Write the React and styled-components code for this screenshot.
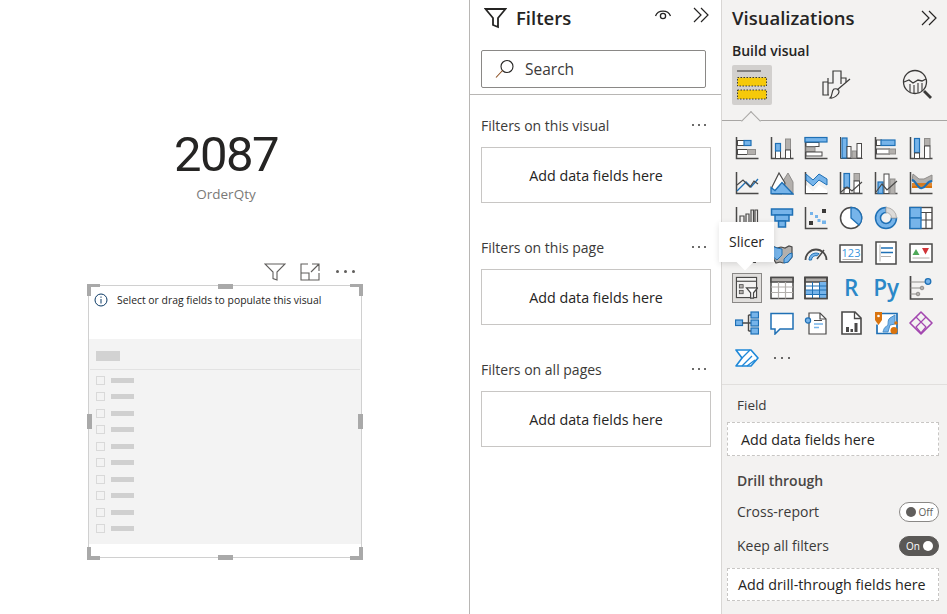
import React from "react";
import styled, { createGlobalStyle } from "styled-components";

const D = "#4a4948";
const B = "#1f70b5";
const L = "#76b4ea";
const G = "#b3b0ad";
const GS = "#8f8d8b";
const O = "#d9730d";
const FONT = `"Open Sans", "Noto Sans", sans-serif`;

const GlobalStyle = createGlobalStyle`
  html, body { margin: 0; padding: 0; height: 100%; background: #fff; }
  #root { height: 100%; }
  * { box-sizing: border-box; }
  body { font-family: ${FONT}; color: #252423; }
`;

const Ic = ({ children, size = 24, fill = "none" }) => (
  <svg width={size} height={size} viewBox="0 0 24 24" fill={fill}>
    {children}
  </svg>
);
const Ax = () => <path d="M1.5 1v21.5H23.5" stroke={D} strokeWidth="1.5" fill="none" />;
const Wr = (p) => <rect fill="#fff" stroke={D} strokeWidth="1" {...p} />;
const Bl = (p) => <rect fill={L} stroke={B} strokeWidth="1.2" {...p} />;
const Gr = (p) => <rect fill={G} stroke={GS} strokeWidth="1" {...p} />;

const icons = [
  <Ic><Ax /><Wr x="2.5" y="4.5" width="7" height="5" /><Bl x="9" y="4.5" width="7" height="5" /><Wr x="2.5" y="13.5" width="10" height="5" /><Gr x="12.5" y="13.5" width="8" height="5" /></Ic>,
  <Ic><Ax /><Wr x="5.5" y="14" width="5" height="8.5" /><Bl x="5.5" y="7.5" width="5" height="7.5" /><Gr x="15.5" y="3" width="5" height="11" /><Wr x="15.5" y="14" width="5" height="8.5" /></Ic>,
  <Ic><Ax /><Wr x="2" y="6.5" width="13" height="4" /><Gr x="2" y="11" width="9" height="4.5" /><Wr x="2" y="16" width="16" height="4" /><Bl x="1" y="1.5" width="22" height="4.5" /></Ic>,
  <Ic><path d="M1.5 1v21.5H23.5" stroke={D} strokeWidth="1" /><Bl x="3" y="2" width="5" height="20" /><Wr x="8" y="10.5" width="4" height="11.5" /><Gr x="13" y="15" width="4.5" height="7" /><Wr x="18" y="7.5" width="4.5" height="14.5" /></Ic>,
  <Ic><Ax /><Wr x="2.5" y="4" width="5" height="5.5" /><Bl x="7" y="4" width="14" height="5.5" /><Wr x="2.5" y="13" width="13" height="5" /><Gr x="15" y="13" width="6.5" height="5" /></Ic>,
  <Ic><Ax /><Bl x="5.5" y="2.5" width="5" height="14" /><Wr x="5.5" y="17" width="5" height="5.5" /><Gr x="15.5" y="2.5" width="5.5" height="7" /><Wr x="15.5" y="10" width="5.5" height="12.5" /></Ic>,

  <Ic><Ax /><path d="M2 20l9-9 5 5 7-8" stroke={B} strokeWidth="1.3" /><path d="M2 14l6-5 7 7 4-6 4 3" stroke={D} strokeWidth="1.2" /></Ic>,
  <Ic><path d="M13 10l5-8 5 9v12H13z" fill={G} stroke={GS} /><path d="M2 16L9 2l6 10-3 11H2z" fill="#fff" stroke={D} strokeWidth="1.2" /><path d="M1 22.5v-6l4 3 7-8 11 11.5z" fill={L} stroke={B} strokeWidth="1.3" /></Ic>,
  <Ic><path d="M1.5 1v21.5H23.5" stroke={D} strokeWidth="1.5" /><path d="M2 14l7 6 6-6 8 5v3H2z" fill="#fff" /><path d="M2 3l7 6 6-6 8 5v6l-8-5-6 6-7-6z" fill={L} stroke={B} strokeWidth="1" /></Ic>,
  <Ic><Ax /><Bl x="5" y="2.5" width="5.5" height="14" /><Wr x="5" y="17" width="5.5" height="5.5" /><Gr x="15" y="2.5" width="5.5" height="7" /><Wr x="15" y="10" width="5.5" height="12" /><path d="M2 21l6-5 5 4 10-9" stroke={D} strokeWidth="1.2" /></Ic>,
  <Ic><Ax /><Bl x="4" y="11" width="5" height="11.5" /><Wr x="10" y="3" width="5" height="19.5" /><Gr x="16" y="8" width="5" height="14.5" /><path d="M2 21l6-8 5 6 10-9" stroke={D} strokeWidth="1.2" /></Ic>,
  <Ic><Ax /><path d="M4 3l6 5h5l8-4v7l-7 3H9L3 10z" fill={G} stroke={GS} /><path d="M3 12h20v5H3z" fill={O} opacity=".85" /><path d="M3 9c4 0 5 9 10 8s4-7 10-7" stroke={B} strokeWidth="2.2" /><path d="M3 16h5M17 16h6" stroke={O} strokeWidth="2" /></Ic>,

  <Ic><Ax /><path d="M5 21V10h4v11M11 21V8h3v13M16 21V4h2.5v17M20 21V4h2.5v17" stroke={D} strokeWidth="1.2" /></Ic>,
  <Ic><path d="M1.5 3h21v6h-21z" fill={L} stroke={B} strokeWidth="1.5" /><path d="M5 9h14v6H5z" fill={L} stroke={B} strokeWidth="1.5" /><path d="M8.5 15h7v6h-7z" fill={L} stroke={B} strokeWidth="1.5" /></Ic>,
  <Ic><Ax /><rect x="5" y="15" width="4" height="4" fill="#3b3a39" /><rect x="18" y="3" width="4" height="4" fill="#3b3a39" /><rect x="6" y="6" width="3" height="3" fill={L} /><rect x="11" y="9" width="3" height="3" fill={L} /><rect x="13.5" y="13" width="3" height="3" fill={L} /><rect x="18" y="14.5" width="4" height="3.5" fill={L} /></Ic>,
  <Ic><circle cx="12" cy="12" r="10.5" fill="#fff" stroke={D} strokeWidth="1.5" /><path d="M12 1.5A10.5 10.5 0 0 1 20 19L12 12z" fill={L} stroke={B} strokeWidth="1.3" /></Ic>,
  <Ic><path d="M12 1.5a10.5 10.5 0 1 0 10.5 10.5h-5a5.5 5.5 0 1 1-5.5-5.5z" fill={L} stroke={B} strokeWidth="1.5" /><path d="M12 1.5a10.5 10.5 0 0 1 10.5 10.5h-5a5.5 5.5 0 0 0-5.5-5.5z" fill="#dddbd9" stroke={G} strokeWidth="1" /></Ic>,
  <Ic><rect x="1" y="1.5" width="22" height="21" fill="#fff" stroke={D} strokeWidth="1.4" /><path d="M12 6.5h11M17 6.5v16M12 14h11" stroke={D} strokeWidth="1.2" /><rect x="1" y="1.5" width="11" height="10.5" fill={L} stroke={B} strokeWidth="1.3" /><rect x="1" y="12" width="11" height="10.5" fill={L} stroke={B} strokeWidth="1.3" /></Ic>,

  <Ic><path d="M4 20c3-3 6 1 9-1s5-1 8 1v2H4z" fill={D} /></Ic>,
  <Ic><path d="M2 5l5 2 4-1 4 1 4-2 3 1v10l-4 5-5 1-3-1-4 1-3-5z" fill={G} stroke={D} strokeWidth="1.2" /><path d="M2 5l5 2 5 1v6l-5 5-5-4z" fill={L} stroke={B} strokeWidth="1" /><path d="M14 18l5-5 3-1v4l-4 5-4 1z" fill={L} stroke={B} strokeWidth="1" /></Ic>,
  <Ic><path d="M1.5 19a10.5 10.5 0 0 1 21 0" stroke={D} strokeWidth="1.8" /><path d="M5 19a7 7 0 0 1 10-6.3l-2 2a4.5 4.5 0 0 0-5.5 4.3z" fill={L} stroke={B} /><path d="M13 18l7-9" stroke={D} strokeWidth="1.5" /></Ic>,
  <Ic><rect x="1" y="4" width="22" height="17" fill="#fff" stroke={D} strokeWidth="1.5" /><text x="12" y="16" textAnchor="middle" fontFamily="Open Sans, sans-serif" fontSize="11" fill="#3a96dd">123</text><path d="M3.5 18.5h17" stroke={G} strokeWidth="1" /></Ic>,
  <Ic><rect x="2" y="1" width="20" height="22" fill="#fff" stroke={D} strokeWidth="1.5" /><path d="M6 3.5v17" stroke={G} /><path d="M7 7h12M7 11.5h12" stroke={B} strokeWidth="1.5" /><path d="M7 15.5h10" stroke={G} strokeWidth="1" /></Ic>,
  <Ic><rect x="1" y="3" width="22" height="18" fill="#fff" stroke={D} strokeWidth="1.5" /><path d="M3.5 14l3.5-6 3.5 6z" fill="#4da858" /><path d="M13 7h7l-3.5 6.5z" fill="#d13438" /><path d="M3.5 17h17" stroke={G} /></Ic>,

  <Ic><rect x="1.5" y="1.5" width="21" height="21" fill="#f3f2f1" stroke={D} strokeWidth="1.2" /><path d="M1.5 5.5h21" stroke={D} strokeWidth="1.2" /><rect x="4.5" y="9" width="4" height="3.5" fill={G} stroke={D} strokeWidth=".8" /><rect x="4.5" y="15" width="4" height="3.5" fill={G} stroke={D} strokeWidth=".8" /><path d="M12 12.5h11.5l-4.2 5v5.5h-3v-5.5z" fill="#fff" stroke={D} strokeWidth="1.3" /></Ic>,
  <Ic><rect x="1" y="1.5" width="22" height="21" fill="#fff" stroke={D} strokeWidth="1.5" /><rect x="1" y="1.5" width="22" height="4.5" fill={G} stroke={D} strokeWidth="1.5" /><path d="M1 11h22M1 16.5h22M8.5 6v16.5M15.5 6v16.5" stroke={G} strokeWidth="1.2" /></Ic>,
  <Ic><rect x="1" y="1.5" width="22" height="21" fill="#fff" stroke={D} strokeWidth="1.5" /><rect x="1" y="1.5" width="22" height="4.5" fill={G} stroke={D} strokeWidth="1.5" /><rect x="15.5" y="6" width="7.5" height="16.5" fill={L} /><rect x="1" y="14" width="22" height="4.5" fill={L} /><path d="M1 14h22M8.5 6v16.5M15.5 6v16.5M1 18.5h22M1 10h22" stroke={B} strokeWidth="1" /><rect x="1" y="1.5" width="22" height="21" fill="none" stroke={D} strokeWidth="1.5" /></Ic>,
  "R",
  "Py",
  <Ic><path d="M1.5 0v23H24" stroke={D} strokeWidth="1.7" /><path d="M1.5 6H18M1.5 12h11M1.5 18h7" stroke={GS} strokeWidth="1.2" /><circle cx="19" cy="5.5" r="2.8" fill={L} stroke={B} strokeWidth="1.3" /><circle cx="13" cy="12" r="1.8" fill={G} stroke={GS} /><circle cx="9" cy="18" r="1.8" fill={G} stroke={GS} /></Ic>,

  <Ic><rect x="0.5" y="9" width="7" height="5.5" fill={L} stroke={B} strokeWidth="1.2" /><path d="M7.5 12h6M13.5 4v16M13.5 4H16M13.5 12H16M13.5 20H16" stroke={D} strokeWidth="1.4" /><rect x="16" y="1" width="7.5" height="6" fill={L} stroke={B} strokeWidth="1.2" /><rect x="16" y="9" width="7.5" height="6" fill={L} stroke={B} strokeWidth="1.2" /><rect x="16" y="17" width="7.5" height="6" fill={L} stroke={B} strokeWidth="1.2" /></Ic>,
  <Ic><path d="M1 2.5h22V18H10l-5 5v-5H1z" fill="#fff" stroke={B} strokeWidth="1.5" /></Ic>,
  <Ic><path d="M5 2h11l6 6v15H5z" fill="#fff" stroke={D} strokeWidth="1.2" /><path d="M16 2v6h6" stroke={D} strokeWidth="1.2" /><circle cx="4" cy="9.5" r="2.6" fill={L} stroke={B} strokeWidth="1.2" /><path d="M10 9.5h8" stroke={D} /><path d="M10 13h9M10 16.5h5" stroke={L} strokeWidth="1.3" /></Ic>,
  <Ic><path d="M3 1h13l6 6v16H3z" fill="#fff" stroke={D} strokeWidth="1.6" /><path d="M15.5 1v6.5H22" stroke={D} strokeWidth="1.3" /><rect x="7" y="16" width="3" height="5" fill={D} /><rect x="11.5" y="18" width="2.5" height="3" fill={D} /><rect x="15.5" y="12" width="3" height="9" fill={D} /></Ic>,
  <Ic><path d="M4 2.5h19v20H3v-9" stroke={B} strokeWidth="1.7" fill="#fff" /><path d="M9 21c1-4 2-5 4-6s0-6 3-8l5-3v9l-5 1-2 7z" fill={L} stroke="#4b8fc8" /><path d="M1 1h7v8l-3.500 5L1 9z" fill={O} /><circle cx="4.5" cy="5" r="1.3" fill="#fff" /><circle cx="20" cy="19.5" r="3.5" fill={O} /><circle cx="22" cy="12" r="1.7" fill={O} /></Ic>,
  <Ic><path d="M12 1l11 11-11 11L1 12z" fill="none" stroke="#a347b0" strokeWidth="1.6" strokeLinejoin="round" /><path d="M7 6l10 10M17 6L7 16M12 11l5 5-5 6-5-6z" fill="none" stroke="#a347b0" strokeWidth="1.2" /></Ic>,

  <Ic><path d="M1 4h15l7 8-7 8H1l6-8z" fill="#fff" stroke="#1e88d8" strokeWidth="1.6" strokeLinejoin="round" /><path d="M7 12l8-8M7 20l10-10M12 20l8-6" stroke="#1e88d8" strokeWidth="1.3" /></Ic>,
  "dots",
];

const HANDLES = ["tl", "tr", "bl", "br", "t", "b", "l", "r"];
const ROWS = [0, 1, 2, 3, 4, 5, 6, 7, 8, 9];

const Chevrons = () => (
  <svg width="16" height="16" viewBox="0 0 16 16" fill="none" stroke="#252423" strokeWidth="1.2">
    <path d="M1 1l7 7-7 7M8 1l7 7-7 7" />
  </svg>
);

const App = () => (
  <Page>
    <GlobalStyle />
    <Canvas>
      <Kpi>
        <KpiValue>2087</KpiValue>
        <KpiLabel>OrderQty</KpiLabel>
      </Kpi>
      <VisualHeader>
        <svg width="22" height="18" viewBox="0 0 22 18" fill="none" stroke="#605e5c" strokeWidth="1.1">
          <path d="M1 1h20l-8 8v8l-4-1.5V9z" />
        </svg>
        <svg width="20" height="18" viewBox="0 0 20 18" fill="none" stroke="#605e5c" strokeWidth="1.1">
          <path d="M8 1H1v16h18v-7M1 10h8v7M12 1h7v7M19 1l-8 8" />
        </svg>
        <DotsDark>
          <i /><i /><i />
        </DotsDark>
      </VisualHeader>
      <Visual>
        {HANDLES.map((h) => (
          <Handle key={h} $at={h} />
        ))}
        <InfoRow>
          <svg width="14" height="14" viewBox="0 0 14 14" fill="none" stroke="#0b3a66" strokeWidth="1">
            <circle cx="7" cy="7" r="6" />
            <path d="M7 6v4.5M7 3.5v1.3" />
          </svg>
          <InfoText>Select or drag fields to populate this visual</InfoText>
        </InfoRow>
        <Placeholder>
          <PlaceholderHead>
            <HeadBar />
          </PlaceholderHead>
          <PlaceholderList>
            {ROWS.map((r) => (
              <PlaceholderRow key={r}>
                <Check />
                <RowBar />
              </PlaceholderRow>
            ))}
          </PlaceholderList>
        </Placeholder>
      </Visual>
    </Canvas>

    <Filters>
      <FiltersHead>
        <svg width="23" height="22" viewBox="0 0 23 22" fill="none" stroke="#252423" strokeWidth="1.8">
          <path d="M1.5 2h20l-7.5 9v9l-5-2v-7z" />
        </svg>
        <PaneTitle>Filters</PaneTitle>
        <HeadIcons>
          <svg width="18" height="14" viewBox="0 0 18 14" fill="none" stroke="#252423" strokeWidth="1.3">
            <path d="M1.5 8C4 1.5 14 1.5 16.5 8" />
            <circle cx="9" cy="8" r="2.6" />
          </svg>
          <Chevrons />
        </HeadIcons>
      </FiltersHead>
      <SearchBox>
        <svg width="20" height="20" viewBox="0 0 20 20" fill="none" stroke="#252423" strokeWidth="1.1">
          <circle cx="12" cy="7.5" r="6" />
          <path d="M7.5 11.5L1 18.5" stroke="#8a4b1c" />
        </svg>
        Search
      </SearchBox>
      <FilterSections>
        {["Filters on this visual", "Filters on this page", "Filters on all pages"].map((t) => (
          <FilterSection key={t}>
            <SectionTitle>
              {t}
              <MoreDots>
                <i /><i /><i />
              </MoreDots>
            </SectionTitle>
            <DropBox>Add data fields here</DropBox>
          </FilterSection>
        ))}
      </FilterSections>
    </Filters>

    <Viz>
      <VizHead>
        <PaneTitle>Visualizations</PaneTitle>
        <Chevrons />
      </VizHead>
      <BuildLabel>Build visual</BuildLabel>
      <Tabs>
        <TabActive>
          <svg width="30" height="30" viewBox="0 0 30 30">
            <path d="M0 1h24" stroke="#4a4948" strokeWidth="1.2" />
            <rect x="0.5" y="7.5" width="29" height="8.5" fill="#f5c90a" stroke="#3b3a39" strokeDasharray="1.5 1.5" />
            <rect x="0.5" y="20" width="29" height="9" fill="#f5c90a" stroke="#3b3a39" strokeDasharray="1.5 1.5" />
          </svg>
        </TabActive>
        <TabIcon $gap={45}>
          <svg width="30" height="30" viewBox="0 0 30 30" fill="none" stroke="#3b3a39" strokeWidth="1.2">
            <path d="M7 25H1V12h5v13M6 12V8M6 13h5V1h8v13M19 8h5v4" />
            <path d="M28 9L15 20M12 19c4-1 5 1 5 3s-5 7-9 6c3-2 1-7 4-9z" fill="#f3f2f1" />
          </svg>
        </TabIcon>
        <TabIcon $gap={41}>
          <svg width="32" height="32" viewBox="0 0 32 32" fill="none" stroke="#3b3a39" strokeWidth="1.3">
            <circle cx="13" cy="13" r="11.5" />
            <path d="M2 13l5-2 4 3 5-3 4 1 4-2" />
            <path d="M8 15v8M12 16v9M16 14v10M20 14v8" strokeWidth="1.1" />
            <path d="M22 22l7 7" strokeWidth="2.8" />
          </svg>
        </TabIcon>
        <Caret />
      </Tabs>

      <IconGrid>
        {icons.map((ic, i) => {
          if (ic === "R" || ic === "Py") return <Cell key={i}><Letter>{ic}</Letter></Cell>;
          if (ic === "dots") return <Cell key={i}><MoreDots $wide><i /><i /><i /></MoreDots></Cell>;
          return <Cell key={i}>{i === 24 ? <Selected>{ic}</Selected> : ic}</Cell>;
        })}
        <Tooltip>Slicer</Tooltip>
      </IconGrid>

      <Wells>
        <WellLabel>Field</WellLabel>
        <Well>Add data fields here</Well>
        <DrillTitle>Drill through</DrillTitle>
        <ToggleRow>
          Cross-report
          <Toggle>
            <Knob />
            <span>Off</span>
          </Toggle>
        </ToggleRow>
        <ToggleRow>
          Keep all filters
          <Toggle $on>
            <span>On</span>
            <Knob $on />
          </Toggle>
        </ToggleRow>
        <Well $tight>Add drill-through fields here</Well>
      </Wells>
    </Viz>
  </Page>
);

export default App;

const Page = styled.div`
  display: flex;
  width: 947px;
  height: 614px;
  overflow: hidden;
`;
const Canvas = styled.main`
  width: 470px;
  flex: none;
  padding: 126px 0 0 88px;
  border-right: 1px solid #b8b6b4;
  background: #fff;
`;
const Kpi = styled.div`
  width: 276px;
  display: flex;
  flex-direction: column;
  align-items: center;
`;
const KpiValue = styled.div`
  font-family: Roboto, sans-serif;
  font-size: 49px;
  line-height: 58px;
  color: #252423;
  letter-spacing: -1.5px;
`;
const KpiLabel = styled.div`
  font-size: 13.5px;
  line-height: 20px;
  color: #7a7977;
`;
const VisualHeader = styled.div`
  width: 274px;
  height: 22px;
  margin-top: 59px;
  padding-right: 7px;
  display: flex;
  justify-content: flex-end;
  align-items: flex-start;
  gap: 14px;
`;
const DotsDark = styled.div`
  display: flex;
  gap: 5px;
  width: 19px;
  margin: 7px 0 0 2px;
  i {
    width: 3px;
    height: 3px;
    border-radius: 50%;
    background: #605e5c;
  }
`;
const Visual = styled.section`
  position: relative;
  width: 274px;
  height: 273px;
  border: 1.5px solid #d0d0d0;
  background: #fff;
  display: flex;
  flex-direction: column;
`;
const handleAt = {
  tl: "left:-2px;top:-2px;width:13px;height:12px;border-width:3px 0 0 4px;",
  tr: "right:-2px;top:-2px;width:13px;height:12px;border-width:3px 4px 0 0;",
  bl: "left:-2px;bottom:-3px;width:13px;height:13px;border-width:0 0 4px 4px;",
  br: "right:-2px;bottom:-3px;width:13px;height:13px;border-width:0 4px 4px 0;",
  t: "left:129px;top:-2px;width:15px;height:5px;border-width:5px 0 0 0;",
  b: "left:129px;bottom:-3px;width:15px;height:5px;border-width:5px 0 0 0;",
  l: "left:-2px;top:128px;width:5px;height:15px;border-width:0 0 0 5px;",
  r: "right:-2px;top:128px;width:5px;height:15px;border-width:0 0 0 5px;",
};
const Handle = styled.div`
  position: absolute;
  border: 0 solid #a9a9a9;
  ${(p) => handleAt[p.$at]}
`;
const InfoRow = styled.div`
  height: 53px;
  flex: none;
  padding: 7px 0 0 5px;
  display: flex;
  align-items: flex-start;
  gap: 9px;
`;
const InfoText = styled.div`
  font-size: 10.4px;
  line-height: 14px;
  color: #252423;
`;
const Placeholder = styled.div`
  height: 205px;
  flex: none;
  background: #f3f3f3;
`;
const PlaceholderHead = styled.div`
  height: 31px;
  margin: 0 1px;
  padding: 12px 0 0 6px;
  border-bottom: 1px solid #e2e2e2;
`;
const HeadBar = styled.div`
  width: 24px;
  height: 10px;
  background: #d2d2d2;
`;
const PlaceholderList = styled.div`
  padding: 6px 0 0 7px;
  display: flex;
  flex-direction: column;
  gap: 7.45px;
`;
const PlaceholderRow = styled.div`
  display: flex;
  align-items: center;
  gap: 6px;
`;
const Check = styled.div`
  width: 9px;
  height: 9px;
  border: 1px solid #d9d9d9;
`;
const RowBar = styled.div`
  width: 23px;
  height: 5px;
  background: #d0d0d0;
`;

const Filters = styled.aside`
  width: 252px;
  flex: none;
  background: #fff;
  border-right: 1px solid #d8d6d4;
`;
const FiltersHead = styled.div`
  height: 36px;
  padding: 0 12px 0 14px;
  display: flex;
  align-items: center;
  gap: 9px;
`;
const PaneTitle = styled.h2`
  margin: 0;
  font-size: 18.5px;
  line-height: 24px;
  font-weight: 600;
  color: #252423;
`;
const HeadIcons = styled.div`
  margin-left: auto;
  display: flex;
  align-items: center;
  gap: 21px;
  svg {
    margin-top: -7px;
  }
`;
const SearchBox = styled.div`
  width: 225px;
  height: 38px;
  margin: 14px 0 6px 11px;
  padding-left: 13px;
  display: flex;
  align-items: center;
  gap: 10px;
  border: 1px solid #8a8886;
  border-radius: 2px;
  font-size: 15.5px;
  color: #3b3a39;
`;
const FilterSections = styled.div`
  border-top: 1px solid #b8b6b4;
  padding: 19px 0 0 11px;
  display: flex;
  flex-direction: column;
  gap: 33px;
`;
const FilterSection = styled.div`
  width: 230px;
`;
const SectionTitle = styled.div`
  height: 22px;
  margin-bottom: 11px;
  display: flex;
  align-items: center;
  justify-content: space-between;
  padding-right: 5px;
  font-size: 14px;
  color: #3b3a39;
`;
const MoreDots = styled.div`
  display: flex;
  gap: ${(p) => (p.$wide ? "5px" : "4px")};
  i {
    width: 2px;
    height: 2px;
    background: #3b3a39;
    border-radius: 50%;
    display: block;
  }
`;
const DropBox = styled.div`
  height: 56px;
  padding-top: 1px;
  border: 1px solid #c8c6c4;
  display: flex;
  align-items: center;
  justify-content: center;
  font-size: 14.3px;
  color: #252423;
`;

const Viz = styled.aside`
  flex: 1;
  min-width: 0;
  background: #f3f2f1;
  display: flex;
  flex-direction: column;
`;
const VizHead = styled.div`
  height: 36px;
  padding: 0 10px;
  display: flex;
  align-items: center;
  justify-content: space-between;
`;
const BuildLabel = styled.div`
  height: 22px;
  margin-top: 5px;
  padding-left: 10px;
  font-size: 14px;
  line-height: 19px;
  font-weight: 600;
  color: #252423;
`;
const Tabs = styled.div`
  position: relative;
  height: 56px;
  margin-top: 2px;
  padding-left: 10px;
  display: flex;
  align-items: flex-start;
  border-bottom: 1px solid #a8a6a4;
`;
const TabActive = styled.div`
  width: 40px;
  height: 40px;
  border-radius: 2px;
  background: #d2d0ce;
  display: flex;
  align-items: center;
  justify-content: center;
`;
const TabIcon = styled.div`
  width: 40px;
  height: 40px;
  margin-left: ${(p) => p.$gap}px;
  display: flex;
  align-items: center;
  justify-content: center;
`;
const Caret = styled.div`
  position: absolute;
  left: 22px;
  bottom: -8px;
  width: 14px;
  height: 14px;
  transform: rotate(45deg);
  background: #f3f2f1;
  border: 1px solid #a8a6a4;
  border-right: 0;
  border-bottom: 0;
`;
const IconGrid = styled.div`
  position: relative;
  padding: 9px 0 0 7.5px;
  height: 264px;
  flex: none;
  display: grid;
  grid-template-columns: repeat(6, 34.8px);
  grid-auto-rows: 35px;
  border-bottom: 1px solid #e1dfdd;
`;
const Cell = styled.div`
  display: flex;
  align-items: center;
  justify-content: center;
`;
const Selected = styled.div`
  width: 30px;
  height: 30px;
  flex: none;
  background: #e1dfdd;
  border: 1px solid #8a8886;
  display: flex;
  align-items: center;
  justify-content: center;
  svg {
    width: 23px;
    height: 23px;
  }
`;
const Letter = styled.div`
  font-family: "Open Sans", sans-serif;
  font-weight: 600;
  font-size: 22.5px;
  line-height: 24px;
  color: #2b88c8;
`;
const Tooltip = styled.div`
  position: absolute;
  left: -3px;
  top: 101px;
  width: 55px;
  height: 40px;
  padding-bottom: 1px;
  display: flex;
  align-items: center;
  justify-content: center;
  background: #fff;
  font-size: 14px;
  color: #252423;
  box-shadow: 0 2px 6px rgba(0, 0, 0, 0.12);
  &::after {
    content: "";
    position: absolute;
    left: 20px;
    bottom: -6px;
    width: 12px;
    height: 12px;
    background: #fff;
    transform: rotate(45deg);
  }
`;
const Wells = styled.div`
  padding: 7px 8px 0 5px;
  display: flex;
  flex-direction: column;
`;
const WellLabel = styled.div`
  height: 26px;
  padding-left: 10px;
  font-size: 13.5px;
  line-height: 26px;
  color: #3b3a39;
`;
const Well = styled.div`
  height: ${(p) => (p.$tight ? "33px" : "34px")};
  margin-top: ${(p) => (p.$tight ? "5px" : "4px")};
  padding-left: ${(p) => (p.$tight ? "10px" : "13px")};
  display: flex;
  align-items: center;
  background: #fff;
  border: 1px dashed #c8c6c4;
  font-size: 14.3px;
  color: #252423;
`;
const DrillTitle = styled.div`
  height: 26px;
  margin-top: 13px;
  padding-left: 10px;
  font-size: 14px;
  line-height: 24px;
  font-weight: 600;
  color: #484644;
`;
const ToggleRow = styled.div`
  height: 34px;
  padding: 0 0 2px 10px;
  display: flex;
  align-items: center;
  justify-content: space-between;
  font-size: 14px;
  color: #3b3a39;
`;
const Toggle = styled.div`
  width: 40px;
  height: 20px;
  margin-top: 2px;
  flex: none;
  padding: 0 5px 0 6px;
  display: flex;
  align-items: center;
  justify-content: space-between;
  border-radius: 10px;
  border: 1px solid ${(p) => (p.$on ? "#5a5856" : "#8a8886")};
  background: ${(p) => (p.$on ? "#5a5856" : "#fff")};
  color: ${(p) => (p.$on ? "#fff" : "#605e5c")};
  font-size: 10px;
`;
const Knob = styled.div`
  width: 10px;
  height: 10px;
  border-radius: 50%;
  background: ${(p) => (p.$on ? "#fff" : "#605e5c")};
`;
